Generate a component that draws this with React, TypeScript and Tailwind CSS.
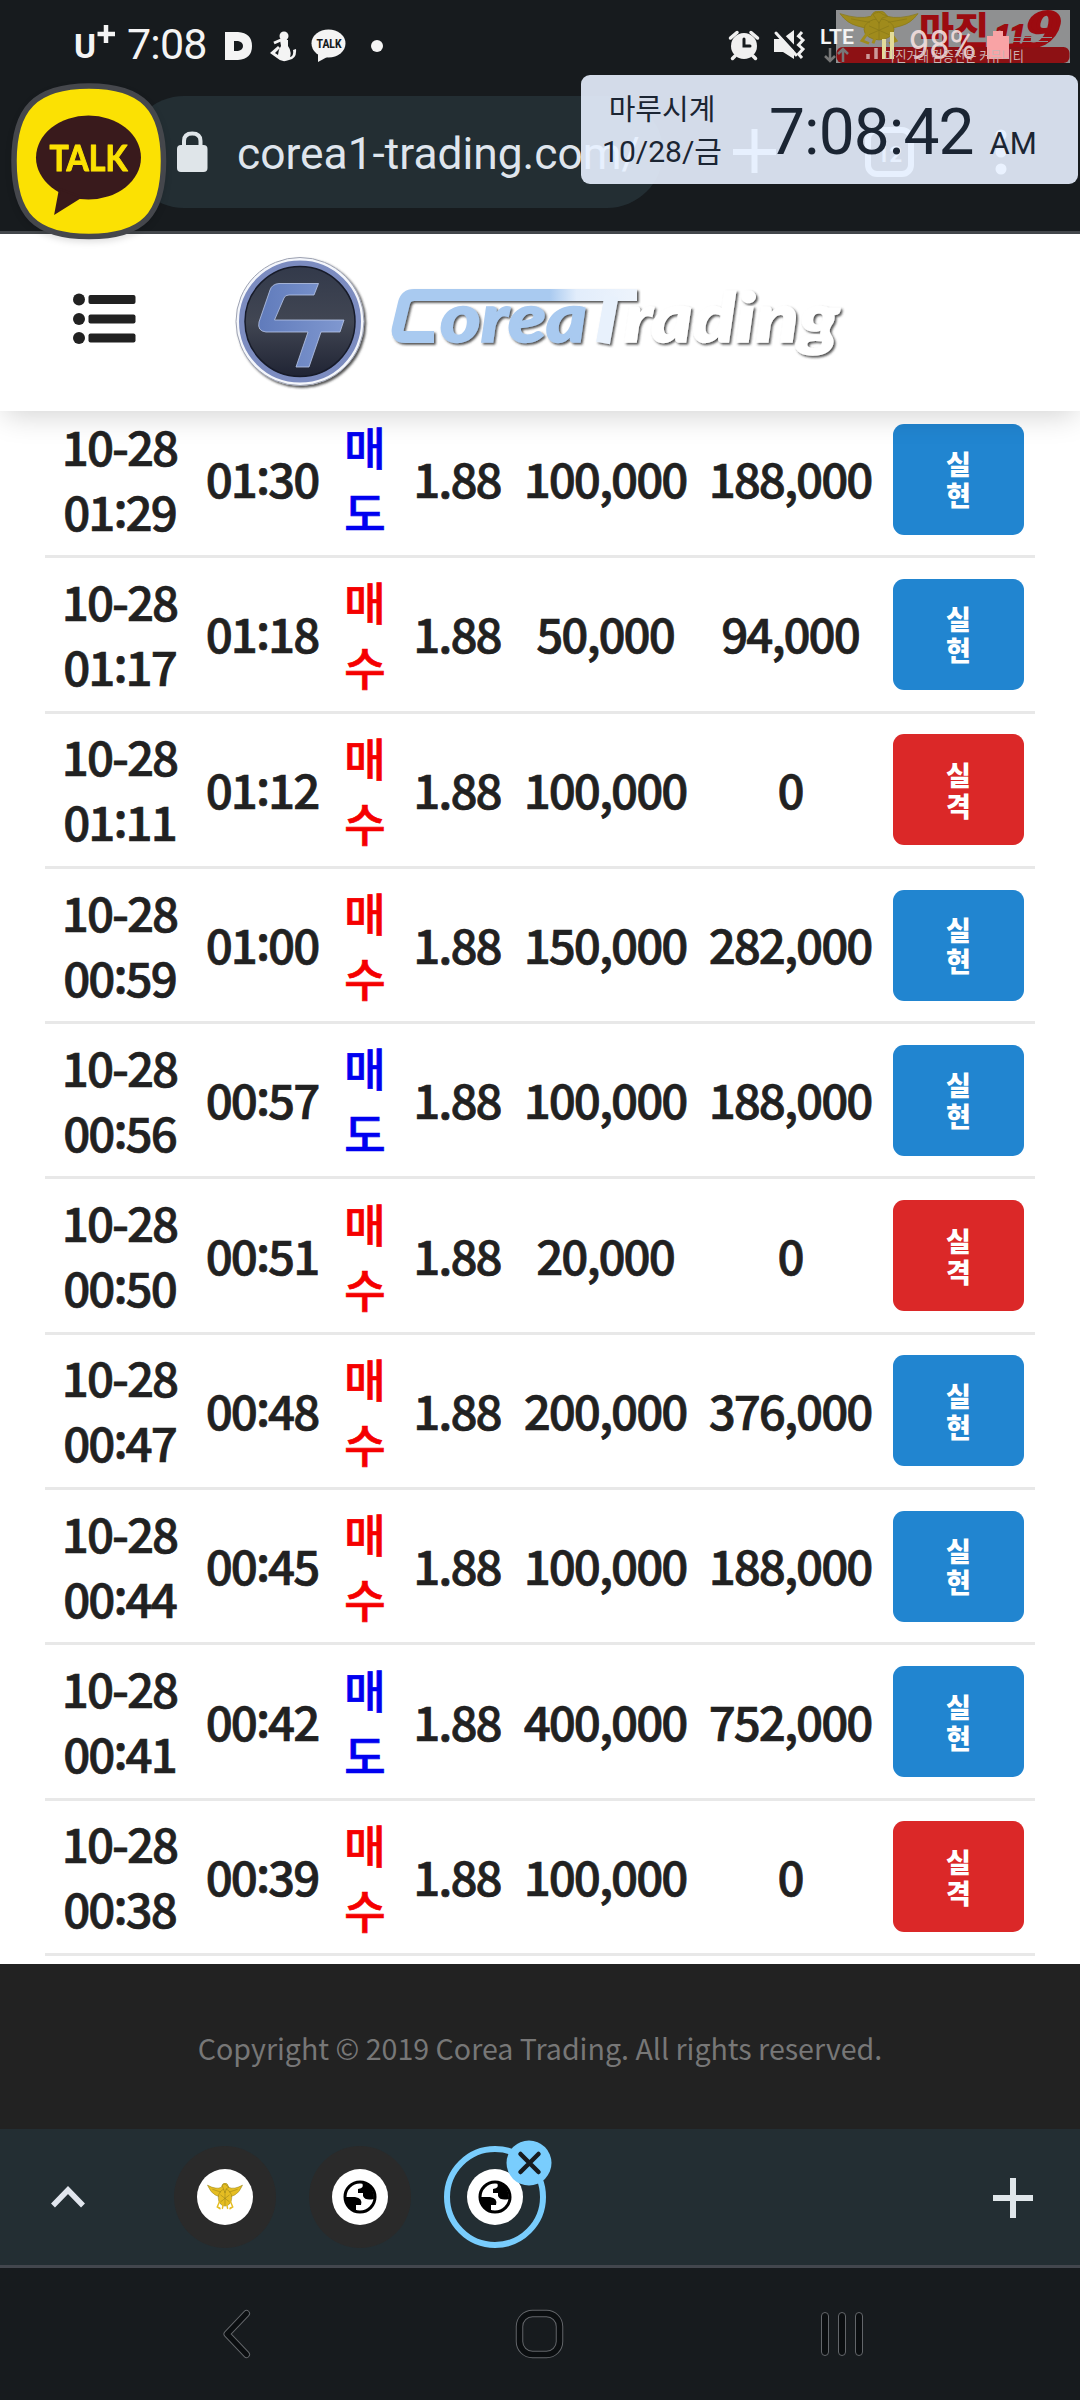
import React from 'react';

type Side = 'sell' | 'buy';

interface Trade {
  opened: string;
  closed: string;
  side: Side;
  amount: string;
  payout: string;
}

const trades: Trade[] = [
  { opened: '01:29', closed: '01:30', side: 'sell', amount: '100,000', payout: '188,000' },
  { opened: '01:17', closed: '01:18', side: 'buy', amount: '50,000', payout: '94,000' },
  { opened: '01:11', closed: '01:12', side: 'buy', amount: '100,000', payout: '0' },
  { opened: '00:59', closed: '01:00', side: 'buy', amount: '150,000', payout: '282,000' },
  { opened: '00:56', closed: '00:57', side: 'sell', amount: '100,000', payout: '188,000' },
  { opened: '00:50', closed: '00:51', side: 'buy', amount: '20,000', payout: '0' },
  { opened: '00:47', closed: '00:48', side: 'buy', amount: '200,000', payout: '376,000' },
  { opened: '00:44', closed: '00:45', side: 'buy', amount: '100,000', payout: '188,000' },
  { opened: '00:41', closed: '00:42', side: 'sell', amount: '400,000', payout: '752,000' },
  { opened: '00:38', closed: '00:39', side: 'buy', amount: '100,000', payout: '0' },
];

const Eagle = ({ className }: { className: string }) => (
  <svg viewBox="0 0 80 40" preserveAspectRatio="none" className={className}>
    <g stroke="#8a7a18" strokeWidth="0.8">
      <path d="M1 3 Q20 10 32 6 Q34 0 40 0 Q46 0 48 6 Q60 10 79 3 Q72 14 62 17 L52 20 L28 20 L18 17 Q8 14 1 3Z" fill="currentColor" />
      <ellipse cx="40" cy="21" rx="15" ry="12" fill="currentColor" />
      <path d="M34 4 Q40 -1 44 4 L49 6 L43 8 L40 14Z" fill="currentColor" />
      <path d="M28 26 L23 34 L30 37 M52 26 L57 34 L50 37 M36 31 L34 37 M44 31 L46 37" strokeWidth="3" stroke="currentColor" fill="none" />
      <path d="M12 9 L31 13 M68 9 L49 13 M40 12 V32 M30 17 L50 27 M50 17 L30 27" fill="none" />
    </g>
  </svg>
);

const StatusBar = () => (
  <div className="relative h-[75px] font-['Roboto',sans-serif] text-[#f4f4f4]">
    <div className="flex items-center h-[88px] pl-[74px]">
      <svg width="42" height="38" viewBox="0 0 42 38" className="shrink-0 mb-1 overflow-visible">
        <text x="0" y="35" fontFamily="Roboto" fontSize="34" fontWeight="700" textLength="22" lengthAdjust="spacingAndGlyphs" fill="#f4f4f4">U</text>
        <path d="M32 2 V20 M23.500 11 H41" stroke="#f4f4f4" strokeWidth="4.500" />
      </svg>
      <span className="ml-[11px] text-[43px] leading-none tracking-[-0.8px]">7:08</span>
      <svg width="28" height="28" viewBox="0 0 28 28" className="ml-[18px] mt-1 shrink-0">
        <path d="M0 0 H13 Q27 1 27 14 Q27 27 13 28 H0Z M9 9 V19 H13 Q18 18 18 14 Q18 10 13 9Z" fill="#f4f4f4" fillRule="evenodd" />
      </svg>
      <svg width="27" height="31" viewBox="0 0 27 31" className="ml-[17px] shrink-0 mt-1">
        <circle cx="14" cy="5" r="4.500" fill="#f4f4f4" />
        <path d="M10 9 H18 V15 Q22 20 20 26 Q24 25 23 19 L26 18 Q27 28 19 29 Q12 32 7 27 L0 22 L8 15 L10 17 L5 22 L8 24 Q8 19 11 15Z" fill="#f4f4f4" />
        <path d="M12 8.500 L4 12" stroke="#f4f4f4" strokeWidth="3" />
      </svg>
      <svg width="36" height="34" viewBox="0 0 36 34" className="ml-[14px] shrink-0 mt-1">
        <ellipse cx="17.500" cy="14.500" rx="17" ry="14" fill="#f4f4f4" />
        <path d="M7 24 L7 33 L18 27Z" fill="#f4f4f4" />
        <text x="5.500" y="18.800" fontFamily="Roboto" fontSize="12" fontWeight="800" textLength="25" lengthAdjust="spacingAndGlyphs" fill="#171b1e">TALK</text>
      </svg>
      <span className="ml-6 mt-[3px] size-3 rounded-full bg-[#f4f4f4]" />
    </div>

    {/* Translucent banner with the system icons on top of it */}
    <svg width="360" height="75" viewBox="720 0 360 75" className="absolute top-0 left-[720px]">
      <g stroke="#f0f0f0" fill="none" strokeWidth="3.500" strokeLinecap="round">
        <circle cx="744" cy="46" r="13" fill="#f0f0f0" stroke="none" />
        <path d="M730.500 38 L737 32.500 M757.500 38 L751 32.500 M735 56 L732.500 58.500 M753 56 L755.500 58.500" />
        <path d="M744 39 V46 H750" stroke="#171b1e" strokeWidth="3" />
      </g>
      <path d="M774 39 H782 L794 30 V59 L783 52 H774Z" fill="#f0f0f0" />
      <path d="M776 29 L804 58" stroke="#171b1e" strokeWidth="4" />
      <path d="M776 33 L796 55" stroke="#f0f0f0" strokeWidth="3" strokeLinecap="round" />
      <path d="M802 32 L798.500 36 L803 40 L798.500 45 L803 49 L798.500 54 L802 58" stroke="#f0f0f0" strokeWidth="3" fill="none" />

      <rect x="836" y="10" width="234" height="53" fill="#8f9091" />
      <svg x="839" y="11" width="80" height="35" viewBox="0 0 80 40" preserveAspectRatio="none">
        <Eagle className="text-[#a08b1c]" />
      </svg>
      <rect x="836.500" y="47" width="233" height="16" rx="6" fill="#8d1114" />
      <text x="919" y="44" fontFamily="Noto Sans CJK KR" fontSize="37" fontWeight="900" textLength="70" lengthAdjust="spacingAndGlyphs" fill="#9c0b10">마진</text>
      <g fontFamily="Liberation Serif" fontWeight="700" fontStyle="italic" fill="#9c0b10" stroke="#9c0b10">
        <text x="994" y="46" fontSize="32" textLength="32" lengthAdjust="spacingAndGlyphs" strokeWidth="2">11</text>
        <text transform="translate(1022 45.500) skewX(-10)" fontSize="52" textLength="34" lengthAdjust="spacingAndGlyphs" strokeWidth="3">9</text>
      </g>
      <path d="M1000 37.500 H1052 M1000 41.500 H1048" stroke="#8f9091" strokeWidth="1" />

      <text x="820" y="43.500" fontFamily="Roboto" fontSize="20" fontWeight="600" textLength="34" lengthAdjust="spacingAndGlyphs" fill="#f4f4f4">LTE</text>
      <path d="M830 48 V61 M825 56 L830 61 L835 56 M843 62 V49 M838 54 L843 49 L848 54" stroke="#777" strokeWidth="2.500" fill="none" />
      <path d="M868 59 V54 M876 59 V48" stroke="#c99" strokeWidth="3.500" />
      <path d="M884 59 V39 M892 59 V32" stroke="#e3dc9a" strokeWidth="4" />
      <text x="909" y="59" fontFamily="Roboto" fontSize="41" textLength="67" lengthAdjust="spacingAndGlyphs" fill="#f6e2e2" fillOpacity="0.9">98%</text>
      <path d="M987 36 H993 V31 H1003 V36 H1009 V59 H987Z" fill="#f9a3a5" />
      <text x="884" y="60.500" fontFamily="Noto Sans CJK KR" fontSize="13.500" textLength="140" lengthAdjust="spacingAndGlyphs" fill="#cdb2b2">마진거래 검증전문 커뮤니티</text>
    </svg>
  </div>
);

const AddressBar = () => (
  <div className="relative h-[156px] pt-[21px]">
    <div className="ml-[128px] w-[535px] h-28 rounded-full bg-[#232e33] flex items-center pl-[49px]">
      <svg width="31" height="42" viewBox="0 0 31 42" className="shrink-0">
        <rect x="0" y="14" width="30.500" height="27" rx="4" fill="#dfe5e9" />
        <path d="M7 16 V10 Q7 2.500 15.200 2.500 Q23.500 2.500 23.500 10 V16" fill="none" stroke="#dfe5e9" strokeWidth="4" />
      </svg>
      <span className="ml-[29px] mt-1 font-['Roboto',sans-serif] text-[44.3px] leading-none text-[#dfe5ed]">
        corea1-trading.com/
      </span>
    </div>
    <svg width="290" height="60" viewBox="725 122 290 60" className="absolute top-[47px] left-[725px]" fill="none">
      <path d="M754.500 129 V173 M733 152 H776" stroke="#dfe5ed" strokeWidth="6" />
      <rect x="868" y="130" width="43" height="44" rx="9" stroke="#dfe5ed" strokeWidth="6" />
      <text x="877" y="162" fontFamily="Roboto" fontSize="22" fontWeight="700" fill="#dfe5ed">12</text>
      <circle cx="1001" cy="135" r="5.500" fill="#dfe5ed" />
      <circle cx="1001" cy="152" r="5.500" fill="#dfe5ed" />
      <circle cx="1001" cy="169" r="5.500" fill="#fff" />
    </svg>

    {/* Clock overlay */}
    <div className="absolute top-0 left-[581px] w-[497px] h-[109px] rounded-[9px] bg-[#e8f1ff]/90 text-[#1b2533] font-['Roboto','Noto_Sans_CJK_KR',sans-serif] flex">
      <div className="w-[162px] pt-[10px] text-center text-[29px]">
        <div className="font-['Noto_Sans_CJK_KR',sans-serif] leading-[44px]">마루시계</div>
        <div className="text-[30px] leading-[46px]">10/28/금</div>
      </div>
      <div className="flex items-baseline pl-[26px] pt-[23px]">
        <span className="text-[64px] leading-[70px] tracking-[-0.9px]">7:08:42</span>
        <span className="ml-4 text-[31px]">AM</span>
      </div>
    </div>

    {/* Floating chat head */}
    <svg width="170" height="170" viewBox="0 0 170 170" className="absolute z-10 top-[2px] left-[3px] drop-shadow-md">
      <path d="M86 9 C140 9 160.500 32 160.500 84 C160.500 138 140 159.500 86 159.500 C32 159.500 11 138 11 84 C11 32 32 9 86 9Z" fill="#fbe103" stroke="#45474c" strokeWidth="5.500" />
      <ellipse cx="85.500" cy="80.500" rx="52.500" ry="42" fill="#391a1c" />
      <path d="M57 112 L52.500 136 L78 120Z" fill="#391a1c" stroke="#391a1c" strokeWidth="2" />
      <text x="46.500" y="94" fontFamily="Lato" fontSize="36" fontWeight="700" textLength="78" lengthAdjust="spacingAndGlyphs" fill="#fbe103" stroke="#fbe103" strokeLinejoin="round">TALK</text>
    </svg>
  </div>
);

const Logo = () => (
  <svg width="640" height="150" viewBox="220 245 640 150" role="img" aria-label="Corea Trading">
    <defs>
      <linearGradient id="disc" x1="0" y1="0" x2="0" y2="1">
        <stop offset="0" stopColor="#32394a" />
        <stop offset="0.5" stopColor="#414653" />
        <stop offset="1" stopColor="#1e2232" />
      </linearGradient>
      <linearGradient id="mark" x1="0" y1="0" x2="1" y2="0">
        <stop offset="0" stopColor="#607bbb" />
        <stop offset="1" stopColor="#8098d0" />
      </linearGradient>
      <linearGradient id="word" gradientUnits="userSpaceOnUse" x1="392" y1="0" x2="638" y2="0">
        <stop offset="0" stopColor="#a9caf0" />
        <stop offset="0.64" stopColor="#a9caf0" />
        <stop offset="0.75" stopColor="#e2edfb" />
        <stop offset="1" stopColor="#eef4fc" />
      </linearGradient>
      <filter id="drop" x="-20%" y="-20%" width="140%" height="140%">
        <feDropShadow dx="1.8" dy="1.8" stdDeviation="1" floodColor="#333333" floodOpacity="0.85" />
      </filter>
    </defs>
    <g filter="url(#drop)">
      <circle cx="300" cy="321.500" r="64" fill="#f4f6fb" stroke="#9da2b2" strokeWidth="1" />
    </g>
    <circle cx="300" cy="321.500" r="58" fill="url(#disc)" stroke="#7c8cc0" strokeWidth="6" />
    <circle cx="300" cy="321.500" r="55" fill="none" stroke="#171b29" strokeWidth="1.500" />
    <path
      d="M279 283.500 H318.500 L314 295 H289 Q285 295 284 298 L274.500 320 H344 L340 332 H321 L309 367 H296 L308 332 H266 Q257 331 259 322 L270 290 Q272 284 279 283.500Z"
      fill="url(#mark)"
      stroke="#b9c6e8"
      strokeWidth="0.8"
    />
    <g filter="url(#drop)">
      <path d="M434 337 H405 Q396 337 398 328 L404 303 Q406 295 414 295 H637" fill="none" stroke="url(#word)" strokeWidth="12" />
      <path d="M611.500 296 L603 343" stroke="#e8f1fc" strokeWidth="14" />
      <g fontFamily="Lato" fontSize="69" fontWeight="900" fontStyle="italic" strokeWidth="1.500">
        <text x="440" y="342" textLength="147" lengthAdjust="spacingAndGlyphs" fill="#a9caf0" stroke="#a9caf0">orea</text>
        <text x="624" y="342" textLength="215" lengthAdjust="spacingAndGlyphs" fill="#fff" stroke="#fff">rading</text>
      </g>
    </g>
  </svg>
);

const SiteHeader = () => (
  <header className="relative z-[5] flex items-center h-[177px] pb-[5px] bg-white shadow-[0_8px_28px_-4px_rgba(0,0,0,0.18)]">
    <svg width="64" height="54" viewBox="72 291 64 54" className="ml-[72px] mb-[3px] shrink-0" fill="#212121">
      <circle cx="79" cy="298.500" r="6" />
      <circle cx="79" cy="318" r="6" />
      <circle cx="79" cy="337" r="6" />
      <rect x="88.500" y="294" width="47" height="9" rx="2" />
      <rect x="88.500" y="313.500" width="47" height="9" rx="2" />
      <rect x="88.500" y="332.500" width="47" height="9" rx="2" />
    </svg>
    <div className="ml-[84px]">
      <Logo />
    </div>
  </header>
);

// The colon sits at mid height between the digits
const Time = ({ value }: { value: string }) => {
  const [hours, minutes] = value.split(':');

  return (
    <span>
      {hours}
      <span className="relative -top-1">:</span>
      {minutes}
    </span>
  );
};

const TradeRow = ({ trade }: { trade: Trade }) => {
  const won = trade.payout !== '0';

  return (
    <div className="grid grid-cols-[149px_136px_70px_114px_182px_188px_151px] items-center h-[155.3px] border-b-[3px] border-[#e8e8e8] text-center">
      <div className="mb-[3px]">10-28<br /><Time value={trade.opened} /></div>
      <div className="mb-[3px]"><Time value={trade.closed} /></div>
      <div className={`text-[45px] tracking-normal ${trade.side === 'sell' ? 'text-[#0000f0]' : 'text-[#f50000]'}`}>
        매<br />{trade.side === 'sell' ? '도' : '수'}
      </div>
      <div className="mb-[3px]">1.88</div>
      <div className="mb-[3px]">{trade.amount}</div>
      <div className="mb-[3px]">{trade.payout}</div>
      <div
        className={`ml-[9px] w-[131px] h-[111px] rounded-[11px] flex items-center justify-center text-white text-[27px] leading-[31px] font-black tracking-normal [-webkit-text-stroke:0] ${
          won ? 'bg-[#2185d0]' : 'bg-[#db2828]'
        }`}
      >
        <span>실<br />{won ? '현' : '격'}</span>
      </div>
    </div>
  );
};

const Globe = () => (
  <svg width="34" height="34" viewBox="0 0 34 34">
    <circle cx="17" cy="17" r="15" fill="#fff" stroke="#000" strokeWidth="3" />
    <path d="M19 3 Q22 8 15 9 V13 H20 V16 Q22 21 31 19 Q31 5 19 3Z" fill="#000" />
    <path d="M2 17 H12 Q20 18 18 25 H13 V31 Q3 28 2 17Z" fill="#000" />
  </svg>
);

const TabStrip = () => (
  <div className="flex items-center h-[139px] shrink-0 bg-[#232e33] border-b-[3px] border-[#43474e]">
    <svg width="36" height="24" viewBox="0 0 36 24" className="ml-[50px] shrink-0">
      <path d="M3 20.500 L18 5 L33 20.500" fill="none" stroke="#e1e6ee" strokeWidth="5.500" />
    </svg>
    <div className="ml-[88px] flex gap-[33px]">
      <div className="size-[102px] rounded-full bg-[#2a2a2a] flex items-center justify-center">
        <div className="size-14 rounded-full bg-white flex items-center justify-center">
          <Eagle className="w-9 h-7 text-[#e5bd22]" />
        </div>
      </div>
      <div className="size-[102px] rounded-full bg-[#2a2a2a] flex items-center justify-center">
        <div className="size-14 rounded-full bg-white flex items-center justify-center">
          <Globe />
        </div>
      </div>
      <div className="relative size-[102px] rounded-full border-[6px] border-[#79cdfd] flex items-center justify-center">
        <div className="size-14 rounded-full bg-white flex items-center justify-center">
          <Globe />
        </div>
        <svg width="46" height="46" viewBox="0 0 46 46" className="absolute -top-3 left-14">
          <circle cx="23" cy="23" r="22.500" fill="#79cdfd" />
          <path d="M14.500 14 L32.500 32 M32.500 14 L14.500 32" stroke="#171b1e" strokeWidth="4.500" strokeLinecap="round" />
        </svg>
      </div>
    </div>
    <svg width="40" height="40" viewBox="0 0 40 40" className="ml-auto mr-[47px] mt-[2px]">
      <path d="M20 0 V40 M0 20 H40" stroke="#dfe6ea" strokeWidth="6" />
    </svg>
  </div>
);

const NavBar = () => (
  <div className="flex h-[132px] shrink-0 items-center bg-[#171b1e]">
    <svg width="30" height="50" viewBox="0 0 30 50" className="ml-[222px]" fill="none" strokeLinecap="round" strokeLinejoin="round">
      <path d="M24.500 4.500 L5 25 L24.500 45.500" stroke="#63666a" strokeWidth="7" />
      <path d="M24.500 4.500 L5 25 L24.500 45.500" stroke="#0b0e10" strokeWidth="5.200" />
    </svg>
    <svg width="50" height="50" viewBox="0 0 50 50" className="ml-[263px]" fill="none">
      <rect x="4.500" y="4.500" width="40" height="41" rx="13" stroke="#63666a" strokeWidth="7.500" />
      <rect x="4.500" y="4.500" width="40" height="41" rx="13" stroke="#0b0e10" strokeWidth="5.500" />
    </svg>
    <div className="ml-[256px] flex gap-[9px]">
      <span className="w-2 h-11 rounded-full border border-[#63666a] bg-[#0b0e10]" />
      <span className="w-2 h-11 rounded-full border border-[#63666a] bg-[#0b0e10]" />
      <span className="w-2 h-11 rounded-full border border-[#63666a] bg-[#0b0e10]" />
    </div>
  </div>
);

const App: React.FC = () => {
  return (
    <div className="w-[1080px] h-[2400px] overflow-hidden bg-white flex flex-col">
      <div className="relative z-10 h-[234px] shrink-0 bg-[#171b1e] border-b-[3px] border-[#43474b]">
        <StatusBar />
        <AddressBar />
      </div>
      <SiteHeader />

      <main className="h-[1553px] shrink-0 px-[45px] overflow-hidden font-['Noto_Sans_CJK_KR',sans-serif] font-medium text-[47.5px] leading-[65px] tracking-[-2px] text-[#212121] [-webkit-text-stroke:0.7px]">
        <div className="-mt-2">
          {trades.map((trade) => (
            <TradeRow key={trade.closed} trade={trade} />
          ))}
        </div>
      </main>

      <footer className="h-[165px] shrink-0 pt-[3px] bg-[#222] flex items-center justify-center font-['Noto_Sans_CJK_KR',sans-serif] text-[28.6px] text-[#777]">
        Copyright © 2019 Corea Trading. All rights reserved.
      </footer>
      <TabStrip />
      <NavBar />
    </div>
  );
};

export default App;
